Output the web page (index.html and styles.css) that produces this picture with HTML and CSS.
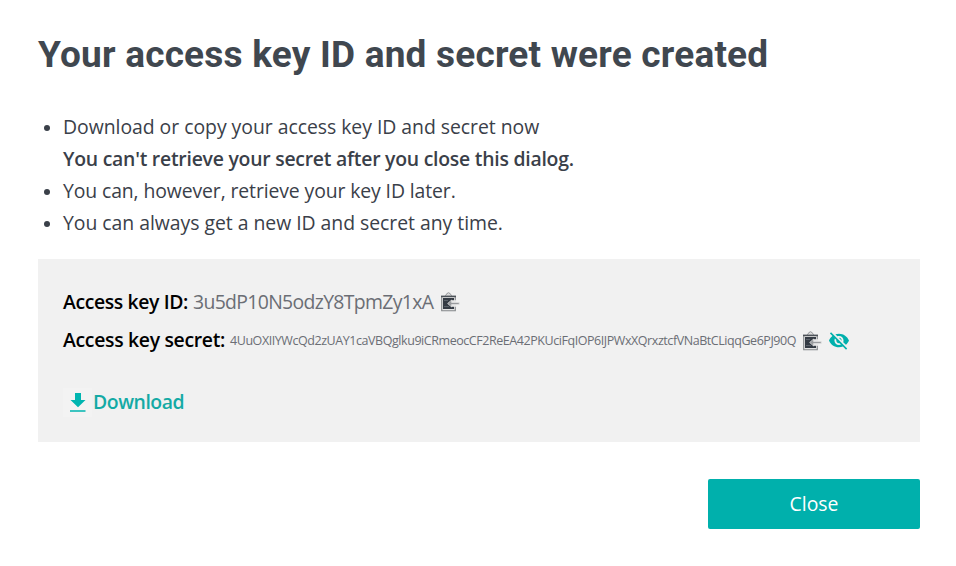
FILE: index.html
```
<!DOCTYPE html>
<html lang="en">
<head>
<meta charset="utf-8">
<title>Access key created</title>
<link rel="stylesheet" href="styles.css">
</head>
<body>
<svg class="defs" aria-hidden="true">
  <symbol id="clipboard" viewBox="0 0 20 20">
    <path d="M5.5 3.5Q6 2.2 7 2q.3-1.3 1.5-1.3T10 2q1 .2 1.5 1.5v1.8h-6z" fill="#ddd" stroke="#96999c"/>
    <path d="M1.7 4.5v14.2h13.6V4.5z" fill="#e4e4e4" stroke="#85888b" stroke-width="1.1"/>
    <rect x="1" y="3.6" width="15" height="1.6" fill="#4c5258"/>
    <path d="M3 6h11v11H3z" fill="#343b44"/>
    <path d="M4 8.5h4M4 14.5h5" stroke="#596068"/>
    <path d="M11 8.2h5.2v6.6H11z" fill="#e7e7e7"/>
    <path d="M7.6 11.5l4-3.5v2.5h7.6v2h-7.6V15z" fill="#999b9e" stroke="#e4e4e4" stroke-width=".7"/>
  </symbol>
</svg>
<main class="dialog">
  <h1 class="title">Your access key ID and secret were created</h1>
  <ul class="notes">
    <li><span class="n1">Download or copy your access key ID and secret now</span><br><strong>You can't retrieve your secret after you close this dialog.</strong></li>
    <li><span class="n2">You can, however, retrieve your key ID later.</span></li>
    <li><span class="n1">You can always get a new ID and secret any time.</span></li>
  </ul>
  <section class="keys">
    <div class="row"><span class="label">Access key ID:</span><span class="value">3u5dP10N5odzY8TpmZy1xA</span><svg class="copy"><use href="#clipboard"/></svg></div>
    <div class="row"><span class="label secret-label">Access key secret:</span><span class="secret">4UuOXIIYWcQd2zUAY1caVBQglku9iCRmeocCF2ReEA42PKUciFqIOP6IJPWxXQrxztcfVNaBtCLiqqGe6PJ90Q</span><svg class="copy lower"><use href="#clipboard"/></svg><svg class="eye" viewBox="1 3 22 19"><path fill="#00b0ac" d="M12 7c2.76 0 5 2.24 5 5 0 .65-.13 1.26-.36 1.83l2.92 2.92c1.51-1.26 2.7-2.89 3.43-4.75-1.73-4.39-6-7.5-11-7.5-1.4 0-2.74.25-3.98.7l2.16 2.16C10.74 7.13 11.35 7 12 7zM2 4.27l2.28 2.28.46.46C3.08 8.3 1.78 10.02 1 12c1.73 4.39 6 7.5 11 7.5 1.55 0 3.03-.3 4.38-.84l.42.42L19.73 22 21 20.73 3.27 3 2 4.27zM7.53 9.8l1.55 1.55c-.05.21-.08.43-.08.65 0 1.66 1.34 3 3 3 .22 0 .44-.03.65-.08l1.55 1.55c-.67.33-1.41.53-2.2.53-2.76 0-5-2.24-5-5 0-.79.2-1.53.53-2.2zm4.31-.78l3.15 3.15.02-.16c0-1.66-1.34-3-3-3l-.17.01z"/></svg></div>
    <a class="download"><svg class="arrow" viewBox="0 0 29 29"><path d="M12 5h6v7h4.5L15 19.3 7.5 12H12zM7 22.3h15.5v1.5H7z" fill="#00b5b0"/></svg><span>Download</span></a>
  </section>
  <button class="close">Close</button>
</main>
</body>
</html>
```
FILE: styles.css
```
* { box-sizing: border-box; }
body { margin: 0; background: #fff; color: #3a4049; font: 19.4px/32px "Open Sans", sans-serif; }
.defs { position: absolute; width: 0; height: 0; }
.dialog { display: flex; flex-direction: column; padding: 31px 36px 0 38px; }
.title { margin: 0; font: 700 37px/48px Roboto, sans-serif; letter-spacing: .21px; color: #40474f; white-space: nowrap; }
.notes { margin: 32px 0 0; padding-left: 25px; white-space: nowrap; list-style: none; }
.notes li { position: relative; }
.notes li::before { content: ""; position: absolute; left: -19px; top: 14px; width: 6px; height: 6px; border-radius: 50%; background: #3a4049; }
.notes strong { font-weight: 600; letter-spacing: -.24px; }
.n1 { letter-spacing: -.03px; }
.n2 { letter-spacing: -.11px; }
.keys { height: 183px; margin-top: 20px; padding: 24px 25px 0; background: #f1f1f1; }
.row { display: flex; align-items: center; height: 38px; white-space: nowrap; }
.label { width: 130px; font-weight: 600; letter-spacing: -.38px; color: #000; }
.secret-label { width: 167px; letter-spacing: -.31px; }
.value { width: 241px; letter-spacing: -.66px; color: #6b6e75; }
.secret { width: 566px; padding-top: 2px; font-size: 12.5px; letter-spacing: -.44px; color: #6b6e75; }
.copy { width: 20px; height: 20px; margin-left: 6px; }
.lower { margin-top: 2px; }
.eye { width: 20px; height: 18px; margin: 2px 0 0 7px; }
.download { display: flex; align-items: center; height: 30px; margin-top: 28px; font-weight: 600; letter-spacing: -.45px; color: #14aaa5; }
.arrow { width: 29px; height: 29px; margin-right: 1px; background: #f3f3f3; }
.close { align-self: flex-end; width: 212px; height: 50px; margin-top: 37px; padding: 0; border: 0; border-radius: 2px; background: #00b0ac; color: #fff; font: 19.4px/50px "Open Sans", sans-serif; }
```
